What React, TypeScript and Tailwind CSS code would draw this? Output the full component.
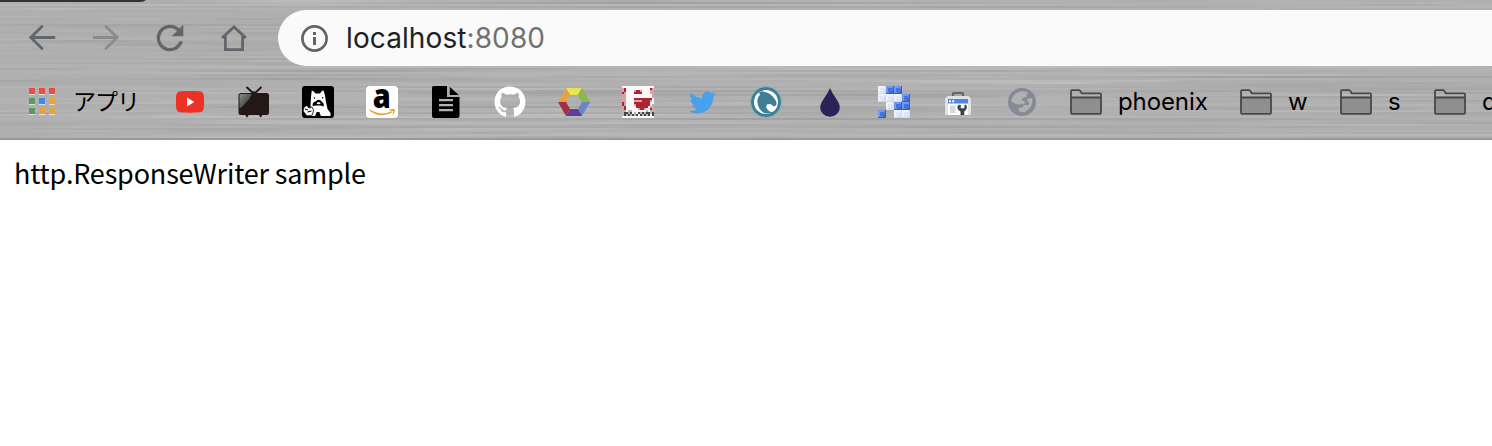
import React from "react";
import { FaGithub, FaTwitter } from "react-icons/fa";

type Streak = { x: number; y: number; w: number; h: number; light: boolean; o: number };

function makeStreaks(): Streak[] {
  let seed = 71;
  const next = () => {
    seed = (seed * 16807) % 2147483647;
    return seed / 2147483647;
  };
  const out: Streak[] = [];
  for (let y = 0; y < 138; y += 2) {
    out.push({ x: 0, y, w: 1492, h: 2, light: next() > 0.5, o: next() * 0.08 });
    for (let i = 0; i < 9; i++) {
      out.push({ x: next() * 1600 - 200, y, w: 80 + next() * 420, h: 2, light: next() > 0.45, o: next() * 0.09 });
    }
  }
  return out;
}
const streaks = makeStreaks();

function BrushedMetal() {
  return (
    <svg className="absolute inset-0" width="1492" height="138" viewBox="0 0 1492 138" aria-hidden="true">
      <defs>
        <linearGradient id="fade">
          <stop offset="0" stopColor="#fff" stopOpacity="0" />
          <stop offset=".3" stopColor="#fff" />
          <stop offset=".7" stopColor="#fff" />
          <stop offset="1" stopColor="#fff" stopOpacity="0" />
        </linearGradient>
        <linearGradient id="fadeDark">
          <stop offset="0" stopColor="#555" stopOpacity="0" />
          <stop offset=".3" stopColor="#555" />
          <stop offset=".7" stopColor="#555" />
          <stop offset="1" stopColor="#555" stopOpacity="0" />
        </linearGradient>
      </defs>
      {streaks.map((s, i) => (
        <rect key={i} x={s.x} y={s.y} width={s.w} height={s.h} fill={s.light ? "url(#fade)" : "url(#fadeDark)"} opacity={s.o} />
      ))}
      <path d="M0 0H146Q144 2 140 2H0Z" fill="#333" />
    </svg>
  );
}

function Back() {
  return (
    <svg width="28" height="28" viewBox="0 0 28 28" fill="none" stroke="#62666b" strokeWidth="2.8" strokeLinecap="round">
      <path d="M26 13.5H3M14 2.5L2.8 13.5 14 24.5" />
    </svg>
  );
}

function Forward() {
  return (
    <svg width="28" height="28" viewBox="0 0 28 28" fill="none" stroke="#8b8b8c" strokeWidth="2.8" strokeLinecap="round">
      <path d="M2 13.5H25M14 2.5L25.2 13.5 14 24.5" />
    </svg>
  );
}

function Reload() {
  return (
    <svg width="28" height="28" viewBox="3.6 3.6 16.8 16.8" fill="#62666b">
      <path d="M17.65 6.35A7.96 7.96 0 0 0 12 4a8 8 0 1 0 7.73 10h-2.08A6 6 0 1 1 12 6c1.66 0 3.14.69 4.22 1.78L13 11h7V4z" />
    </svg>
  );
}

function Home() {
  return (
    <svg width="28" height="28" viewBox="0 0 28 28" fill="none" stroke="#62666b" strokeWidth="2.8">
      <path d="M2 14L14 3 26 14M5.4 12V25.6H22.6V12" strokeLinejoin="miter" />
    </svg>
  );
}

function Info() {
  return (
    <svg width="28" height="28" viewBox="0 0 28 28">
      <circle cx="14.5" cy="14.5" r="12.1" fill="none" stroke="#626467" strokeWidth="2.7" />
      <path d="M13 8h3v3h-3zM13 13h3v8h-3z" fill="#626467" />
    </svg>
  );
}

const appColors = ["#ea4e43", "#ea4e43", "#ea4e43", "#559d62", "#4089ee", "#eaa337", "#559d62", "#eaa337", "#eaa337"];

function Apps() {
  return (
    <div className="mt-[-2px] grid w-[26px] shrink-0 grid-cols-3 gap-1">
      {appColors.map((c, i) => (
        <div key={i} className="size-1.5 shadow-[0_1px_0_#dedede]" style={{ backgroundColor: c }} />
      ))}
    </div>
  );
}

function Icon({ children }: { children: React.ReactNode }) {
  return (
    <svg width="32" height="32" viewBox="0 0 32 32" className="shrink-0">
      {children}
    </svg>
  );
}

function YouTube() {
  return (
    <Icon>
      <path d="M7 5.3Q16 4.6 25 5.3Q29.5 5.5 29.8 9.5Q30.4 16 29.8 22Q29.4 26 25.5 26.3Q16 27.2 6.5 26.3Q2.6 26 2.2 22Q1.6 16 2.2 9.5Q2.5 5.5 7 5.3Z" fill="#ed3124" />
      <path d="M13 11.5L20.3 16 13 20.5Z" fill="#fff" />
    </Icon>
  );
}

function Television() {
  return (
    <Icon>
      <defs>
        <linearGradient id="shine" x1="0" x2="1" y1="0" y2="1">
          <stop stopColor="#8c8c8c" />
          <stop offset="1" stopColor="#222" />
        </linearGradient>
      </defs>
      <path d="M8.5 1L16 8 23.5 1" fill="none" stroke="#231815" strokeWidth="2" />
      <path d="M12 8L16 5 20 8Z" fill="#231815" />
      <rect x=".5" y="7" width="30.5" height="22" rx="2.5" fill="#231815" />
      <path d="M7 28.5h4l-2 3.3zM20.5 28.5h4l-1.6 3.3z" fill="#231815" />
      <path d="M1.5 9.5Q1.5 8 3 8H14Q12 10.5 11.5 13Q8 16 5 20L1.5 22.5Z" fill="url(#shine)" />
    </Icon>
  );
}

function Mascot() {
  return (
    <Icon>
      <rect width="32" height="32" rx="3" fill="#000" />
      <path d="M8.5 19L9.2 9 9.8 4.5Q12 5 13.5 7.5H18Q19.5 4.8 21.4 4.3L23 9.5 24 16 25.5 23 28.5 27V30H6L9 23Z" fill="#fff" />
      <circle cx="12.4" cy="12" r=".8" />
      <circle cx="20.6" cy="11.8" r=".8" />
      <path d="M10.6 20Q10.2 16.6 13 15.8L15.5 14H18L20 15.8Q22.2 17 21.8 20.5L18.6 19.6H14.2Z" />
      <ellipse cx="16.6" cy="17.2" rx="2" ry="1" fill="#fff" />
      <path d="M13 30.2L14.6 26H17.4L19 30.2Z" />
      <path d="M2 21L5 19.5L7 22L10 21 11.5 24 10.5 29 5 30 1 25Z" fill="#fff" stroke="#000" strokeWidth=".8" />
      <path d="M3 23l3 1M5.5 26l4-1" stroke="#000" fill="none" />
    </Icon>
  );
}

function Amazon() {
  return (
    <Icon>
      <rect width="32" height="32" rx="4" fill="#fff" />
      <text x="6.8" y="22" fontFamily="Open Sans, sans-serif" fontWeight="800" fontSize="34" textLength="18" lengthAdjust="spacingAndGlyphs" fill="#000">a</text>
      <path d="M3.5 23.3Q14 30.5 25.5 25.2L26.5 26.2Q14 33 3.1 24.2Z" fill="#f19a20" />
      <path d="M23 23.7Q27.5 22.2 28.8 23.5Q29 27 26.3 29.1Q27.5 26 27.2 24.9Q26 24.2 23 24.5Z" fill="#f19a20" />
    </Icon>
  );
}

function Document() {
  return (
    <Icon>
      <path d="M3.5 0H17V11H29.5V29.5Q29.5 32 27.5 32H4Q2 32 2 30V2Q2 0 3.5 0Z" />
      <path d="M19.8 1L28.8 9H19.8Z" />
      <path d="M9 14.2H23M9 19.2H23M9 24.2H23" stroke="#b2b2b2" strokeWidth="2.2" />
    </Icon>
  );
}

function Hexagon() {
  return (
    <Icon>
      <path d="M8 2H24L20 9H12Z" fill="#e9e44d" />
      <path d="M24 2L32 16H24L20 9Z" fill="#87b94b" />
      <path d="M32 16L24 30 20 23 24 16Z" fill="#6886c8" />
      <path d="M24 30H8L12 23H20Z" fill="#5e3d94" />
      <path d="M8 30L0 16H8L12 23Z" fill="#a42c43" />
      <path d="M0 16L8 2 12 9 8 16Z" fill="#e7a142" />
    </Icon>
  );
}

const erlangRows = [
  "wwwwwwwwwwwwwwww",
  "prwwwwwwwwwwwwrp",
  "prwwwwprrpwwwwpp",
  "rpwwwwrrrrwwwwpp",
  "ppwwwwwwwwwwwwwp",
  "ppwwwwwwwwwwwwwp",
  "ppwwwwrrrrrrrrrw",
  "ppwwwwpppprrrrpw",
  "rpwwwwrrrrrrrrww",
  "rpwwwwprrrrrrrwp",
  "prwwwwwrrrrrrwpp",
  "prwwwwwwprrpwwrp",
  "ggwggwwwwwwwgwgg",
  "gkkgkwgwkgkgkkgk",
  "gkgkgkgkwkgkgkwk",
  "wwwwwwwwwwwwwwww",
];
const pixelColor: Record<string, string> = { w: "#fbf7f8", r: "#ab2430", p: "#dba0a8", k: "#444", g: "#b8b8b8" };

function Erlang() {
  return (
    <Icon>
      <g shapeRendering="crispEdges">
        {erlangRows.flatMap((row, y) =>
          row.split("").map((c, x) => <rect key={`${x}-${y}`} x={x * 2} y={y * 2} width="2" height="2" fill={pixelColor[c]} />),
        )}
      </g>
    </Icon>
  );
}

function Horse() {
  return (
    <Icon>
      <circle cx="16" cy="16" r="15.5" fill="#3d8095" stroke="#8eb2bd" />
      <circle cx="16" cy="16" r="12" fill="#fff" />
      <path d="M9 6.5L12 5.2L17 6.5Q23 9 26.5 16L26.3 19.2L24 20.6L20.5 18L17.3 18.2Q15 20.5 17.5 23.5Q19 25.8 23 26.5Q12 30 7.6 20.5Q5.5 13 10 9Z" fill="#3d8095" />
      <path d="M8.6 9.6Q5.6 16.5 9.4 22.6Q11.4 26 15 27.6Q6.6 26.4 4.6 18.8Q4 13.4 8.6 9.6Z" fill="#fff" />
    </Icon>
  );
}

function Drop() {
  return (
    <Icon>
      <path d="M16 2Q18 7 22.5 13.2Q25.8 18 25.8 21.5A9.8 9.3 0 0 1 6.2 21.5Q6.2 18 9.5 13.2Q14 7 16 2Z" fill="#2c2258" />
    </Icon>
  );
}

const tiles = ["lbb.", "lllb", ".lbb", "b.ll"];

function Tile({ x, y, blue }: { x: number; y: number; blue: boolean }) {
  return (
    <g transform={`translate(${x} ${y})`}>
      <path d="M0 0H8V8H0Z" fill={blue ? "#3660cf" : "#d3dbed"} />
      <path d="M0 0H7L6 6 0 7Z" fill={blue ? "#7398ed" : "#edf2fc"} />
      <path d="M2 2H6V6H2Z" fill={blue ? "#4773dc" : "#dfe6f5"} />
    </g>
  );
}

function Tiles() {
  return (
    <Icon>
      {tiles.flatMap((row, y) =>
        row.split("").map((c, x) => (c === "." ? null : <Tile key={`${x}-${y}`} x={x * 8} y={y * 8} blue={c === "b"} />)),
      )}
    </Icon>
  );
}

function Toolbox() {
  return (
    <Icon>
      <path d="M11 10V7.5Q11 7 12 7H20Q21 7 21 8V10" fill="none" stroke="#606469" strokeWidth="2.2" />
      <path d="M6 10H26Q29 11 29 14V27.3Q29 29 27.5 29H4.5Q3 29 3 27.3V14Q3 11 6 10Z" fill="#e1e2e3" />
      <path d="M6 13H26V29H6Z" fill="#fff" />
      <path d="M6 13H26V17.5H6Z" fill="#4c84ea" />
      <path d="M7 14.2h2v2h-2zM10.2 14.2h2v2h-2z" fill="#fff" />
      <path d="M8 19.5H13.5V27H8Z" fill="#d8d8d8" />
      <path d="M16.5 18.8Q14 22 17 24.6L18.5 25.4V29H22.3V25.4Q26.6 22.5 24 18.8L22.4 19V22.2H18.8V19Z" fill="#3f4348" />
    </Icon>
  );
}

function Globe() {
  return (
    <Icon>
      <circle cx="16" cy="16" r="14" fill="#858b94" />
      <path d="M14.5 5.5Q20 4.8 22.5 7L20.5 8.5V11L17.5 11.5L15.5 14L19.5 16.2L17.8 18.3H10L5.2 15Q6.5 7.5 14.5 5.5Z" fill="#b0b0b0" />
      <path d="M21.3 12.8L26.2 12Q28 21 18.5 26.3L12.7 25.5V22L16.6 21.5L18 19H22.8Q24 16.4 21.3 15.8Z" fill="#b0b0b0" />
    </Icon>
  );
}

function Folder({ label }: { label: string }) {
  return (
    <>
      <svg width="32" height="26" viewBox="0 0 32 26" className="mt-[-1px] shrink-0">
        <path d="M1.2 8H30.8V24.8H1.2Z" fill="#8f8f8f" />
        <path d="M1 23.8V2.2Q1 1.2 2 1.2H9.2Q10 1.2 11.7 4.3H30Q31 4.3 31 5.3V23.8Q31 24.8 30 24.8H2Q1 24.8 1 23.8ZM1.5 8.5H30.5" fill="none" stroke="#484848" strokeWidth="1.8" />
      </svg>
      <span className="shrink-0 pl-4 leading-8 tracking-[-0.1px]">{label}</span>
    </>
  );
}

export default function App() {
  return (
    <main className="h-[446px] w-[1492px] overflow-hidden bg-white text-black">
      <header className="relative h-[140px] overflow-hidden border-b-2 border-[#999] bg-[#afafaf]">
        <BrushedMetal />
        <div className="relative flex h-full flex-col pt-2.5">
          <div className="flex h-14 shrink-0 items-center pl-7">
            <nav className="flex w-[250px] shrink-0 items-center gap-9">
              <Back />
              <Forward />
              <Reload />
              <Home />
            </nav>
            <div className="flex h-14 flex-1 items-center rounded-l-full bg-[#fafafa] pl-[22px]">
              <Info />
              <div className="pl-[18px] font-['Inter',sans-serif] text-[28px] leading-[56px] tracking-[0.1px] text-[#202124]">
                localhost<span className="text-[#717171]">:8080</span>
              </div>
            </div>
          </div>
          <div className="flex h-[72px] items-center overflow-hidden pl-[29px] font-['Inter','Noto_Sans_CJK_JP',sans-serif] text-2xl whitespace-nowrap">
            <Apps />
            <span className="mt-[-4px] w-[99px] shrink-0 pl-[18px] font-['Noto_Sans_CJK_JP',sans-serif] text-[23px] leading-8 tracking-[-1px]">アプリ</span>
            <div className="mr-8 ml-5 flex shrink-0 items-center gap-8">
              <YouTube />
              <Television />
              <Mascot />
              <Amazon />
              <Document />
              <FaGithub className="size-8 text-white" />
              <Hexagon />
              <Erlang />
              <FaTwitter className="mx-[2.5px] size-[27px] text-[#4aa1eb]" />
              <Horse />
              <Drop />
              <Tiles />
              <Toolbox />
              <Globe />
            </div>
            <div className="flex w-[170px] shrink-0 items-center"><Folder label="phoenix" /></div>
            <div className="flex w-[100px] shrink-0 items-center"><Folder label="w" /></div>
            <div className="flex w-[94px] shrink-0 items-center"><Folder label="s" /></div>
            <div className="flex shrink-0 items-center"><Folder label="d" /></div>
          </div>
        </div>
      </header>
      <p className="pt-3.5 pl-3.5 font-['Noto_Sans_CJK_JP',sans-serif] text-[27px] leading-[38px] tracking-[-0.18px]">http.ResponseWriter sample</p>
    </main>
  );
}
